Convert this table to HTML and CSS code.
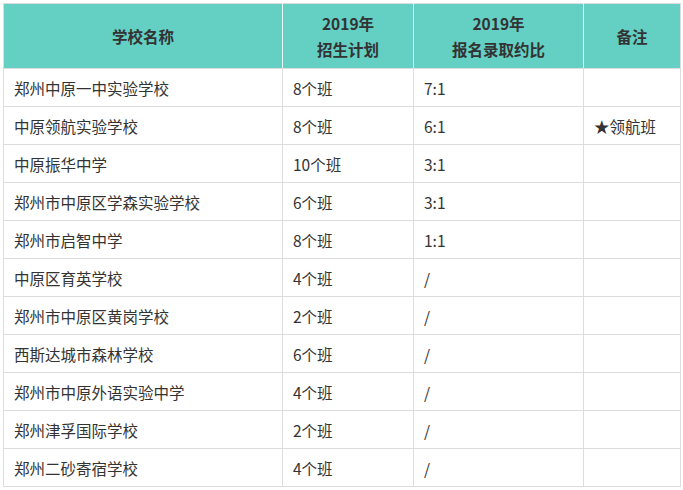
FILE: index.html
```html
<!DOCTYPE html>
<html lang="zh">
<head>
<meta charset="utf-8">
<link rel="stylesheet" href="styles.css">
</head>
<body>
<table class="plan">
  <colgroup>
    <col class="c1"><col class="c2"><col class="c3"><col class="c4">
  </colgroup>
  <thead>
    <tr>
      <th>学校名称</th>
      <th>2019年<br>招生计划</th>
      <th>2019年<br>报名录取约比</th>
      <th>备注</th>
    </tr>
  </thead>
  <tbody>
    <tr><td>郑州中原一中实验学校</td><td>8个班</td><td>7:1</td><td></td></tr>
    <tr><td>中原领航实验学校</td><td>8个班</td><td>6:1</td><td>★领航班</td></tr>
    <tr><td>中原振华中学</td><td>10个班</td><td>3:1</td><td></td></tr>
    <tr><td>郑州市中原区学森实验学校</td><td>6个班</td><td>3:1</td><td></td></tr>
    <tr><td>郑州市启智中学</td><td>8个班</td><td>1:1</td><td></td></tr>
    <tr><td>中原区育英学校</td><td>4个班</td><td>/</td><td></td></tr>
    <tr><td>郑州市中原区黄岗学校</td><td>2个班</td><td>/</td><td></td></tr>
    <tr><td>西斯达城市森林学校</td><td>6个班</td><td>/</td><td></td></tr>
    <tr><td>郑州市中原外语实验中学</td><td>4个班</td><td>/</td><td></td></tr>
    <tr><td>郑州津孚国际学校</td><td>2个班</td><td>/</td><td></td></tr>
    <tr><td>郑州二砂寄宿学校</td><td>4个班</td><td>/</td><td></td></tr>
  </tbody>
</table>
</body>
</html>
```
FILE: styles.css
```css
html, body {
  margin: 0;
  padding: 0;
  background: #ffffff;
}
body {
  padding: 3px;
  font-family: "Noto Sans CJK SC", "Noto Sans", sans-serif;
  color: #333333;
}
.plan {
  border-collapse: collapse;
  table-layout: fixed;
  width: 677px;
  font-size: 15.5px;
}
.c1 { width: 279px; }
.c2 { width: 131px; }
.c3 { width: 170px; }
.c4 { width: 97px; }
.plan th {
  background: #64cfc3;
  color: #333333;
  font-weight: bold;
  height: 64px;
  line-height: 26px;
  padding: 0;
  text-align: center;
  vertical-align: middle;
  border: 1px solid #dddddd;
  border-left-color: #e8f7f5;
  border-right-color: #e8f7f5;
}
.plan th:first-child { border-left-color: #dddddd; }
.plan th:last-child { border-right-color: #dddddd; }
.plan td {
  height: 37px;
  padding: 0 0 0 10px;
  line-height: 20px;
  vertical-align: middle;
  border: 1px solid #dddddd;
  white-space: nowrap;
}
```
